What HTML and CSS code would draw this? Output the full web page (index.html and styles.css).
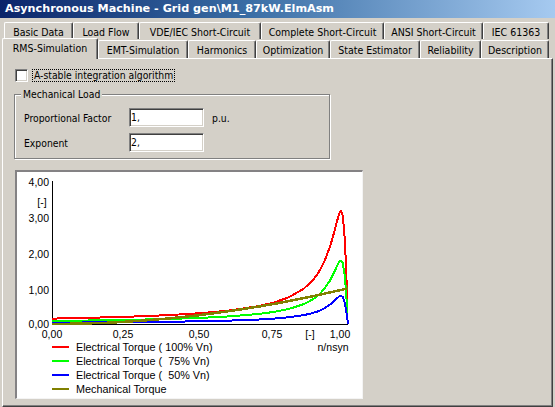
FILE: index.html
```html
<!DOCTYPE html>
<html>
<head>
<meta charset="utf-8">
<link rel="stylesheet" href="styles.css">
</head>
<body>
<div class="window">
  <div class="titlebar">Asynchronous Machine - Grid gen\M1_87kW.ElmAsm</div>
  <div class="tabs">
    <div class="tabrow back">
      <div class="tab w-basic">Basic Data</div>
      <div class="tab w-load">Load Flow</div>
      <div class="tab w-vde">VDE/IEC Short-Circuit</div>
      <div class="tab w-complete">Complete Short-Circuit</div>
      <div class="tab w-ansi">ANSI Short-Circuit</div>
      <div class="tab w-iec">IEC 61363</div>
    </div>
    <div class="tabrow front">
      <div class="tab selected w-rms">RMS-Simulation</div>
      <div class="tab w-emt">EMT-Simulation</div>
      <div class="tab w-harm">Harmonics</div>
      <div class="tab w-opt">Optimization</div>
      <div class="tab w-se">State Estimator</div>
      <div class="tab w-rel">Reliability</div>
      <div class="tab w-desc">Description</div>
    </div>
  </div>
  <div class="panel">
    <div class="checkrow">
      <span class="checkbox"></span>
      <span class="focus">A-stable integration algorithm</span>
    </div>
    <fieldset class="group">
      <legend>Mechanical Load</legend>
      <div class="field-row">
        <span class="field-label">Proportional Factor</span>
        <span class="input">1,</span>
        <span class="unit">p.u.</span>
      </div>
      <div class="field-row">
        <span class="field-label">Exponent</span>
        <span class="input">2,</span>
      </div>
    </fieldset>
    <div class="chart">
      <svg class="plot" width="345" height="226" viewBox="17 172 345 226">
        <g class="labels">
          <text x="49" y="186" text-anchor="end">4,00</text>
          <text x="42" y="206" text-anchor="middle">[-]</text>
          <text x="49" y="222" text-anchor="end">3,00</text>
          <text x="49" y="258" text-anchor="end">2,00</text>
          <text x="49" y="294" text-anchor="end">1,00</text>
          <text x="49" y="328" text-anchor="end">0,00</text>
          <text x="52" y="338" text-anchor="middle">0,00</text>
          <text x="123" y="338" text-anchor="middle">0,25</text>
          <text x="199" y="338" text-anchor="middle">0,50</text>
          <text x="272" y="338" text-anchor="middle">0,75</text>
          <text x="310" y="338" text-anchor="middle">[-]</text>
          <text x="340" y="338" text-anchor="middle">1,00</text>
          <text x="333" y="351" text-anchor="middle">n/nsyn</text>
        </g>
        <g class="axes">
          <line x1="52.5" y1="181" x2="52.5" y2="324.5"/>
          <line x1="52" y1="324.5" x2="348" y2="324.5"/>
        </g>
        <g class="curves">
          <polyline class="c-red" points="52,318.6 81.6,318 111.2,317.2 140.8,316.3 170.4,315 200,313.2 229.6,310.5 259.2,306 274,302.5 288.8,297.3 303.6,288.8 312.5,280.6 318.4,272.7 324.3,261.8 330.2,246.1 333.2,235.8 336.2,224.3 339.1,213.8 340.9,211 342.7,215.5 344.4,233.6 345.6,256.2 346.8,287.4 347.4,305"/>
          <polyline class="c-green" points="52,320.9 81.6,320.6 111.2,320.2 140.8,319.6 170.4,318.9 200,317.9 229.6,316.4 259.2,313.9 274,311.9 288.8,309 303.6,304.2 312.5,299.6 318.4,295.2 324.3,289 330.2,280.2 333.2,274.4 336.2,267.9 339.1,262 340.9,260.5 342.7,263 344.4,273.2 345.6,285.9 346.8,303.4 347.4,313.5"/>
          <polyline class="c-blue" points="52,322.6 81.6,322.5 111.2,322.3 140.8,322.1 170.4,321.7 200,321.3 229.6,320.6 259.2,319.5 274,318.6 288.8,317.3 303.6,315.2 312.5,313.1 318.4,311.2 324.3,308.4 330.2,304.5 333.2,302 336.2,299.1 339.1,296.4 340.9,295.8 342.7,296.9 344.4,301.4 345.6,307.1 346.8,314.8 347.4,319.4 348,324"/>
          <polyline class="c-olive" points="52,324 81.6,323.6 111.2,322.6 140.8,320.8 170.4,318.3 200,315.1 229.6,311.1 259.2,306.5 274,303.9 288.8,301.1 303.6,298.1 318.4,295 333.2,291.7 348,288.3"/>
        </g>
        <g class="legend">
          <line class="c-red" x1="52" y1="347" x2="69" y2="347"/>
          <line class="c-green" x1="52" y1="361" x2="69" y2="361"/>
          <line class="c-blue" x1="52" y1="375" x2="69" y2="375"/>
          <line class="c-olive" x1="52" y1="389" x2="69" y2="389"/>
          <text x="76" y="351">Electrical Torque ( 100% Vn)</text>
          <text x="76" y="365">Electrical Torque (  75% Vn)</text>
          <text x="76" y="379">Electrical Torque (  50% Vn)</text>
          <text x="76" y="393">Mechanical Torque</text>
        </g>
      </svg>
    </div>
  </div>
</div>
</body>
</html>
```

FILE: styles.css
```css
html, body {
  margin: 0;
  padding: 0;
}
body {
  width: 555px;
  height: 407px;
  overflow: hidden;
  background: #d4d0c8;
  color: #000;
  font-family: "DejaVu Sans Condensed", "DejaVu Sans", sans-serif;
  font-stretch: condensed;
  font-size: 10.3px;
}
.window {
  width: 555px;
  height: 407px;
}
.titlebar {
  height: 18px;
  line-height: 18px;
  padding-left: 5px;
  background: linear-gradient(to right, #0a246a 0%, #3a6ea5 45%, #a6caf0 100%);
  color: #fff;
  font-family: "DejaVu Sans", sans-serif;
  font-stretch: normal;
  font-weight: bold;
  font-size: 11.2px;
  white-space: nowrap;
}
.tabs {
  padding-top: 3px;
  font-size: 10.5px;
}
.tabrow {
  display: flex;
  align-items: flex-start;
  box-sizing: border-box;
}
.tabrow.back {
  height: 18px;
  padding: 1px 0 0 4px;
}
.tabrow.front {
  height: 19px;
  padding-left: 2px;
}
.tab {
  box-sizing: border-box;
  display: flex;
  align-items: center;
  justify-content: center;
  height: 17px;
  padding-top: 1px;
  border-top: 1px solid #fff;
  border-left: 1px solid #fff;
  border-right: 1px solid #404040;
  box-shadow: inset -1px 0 #808080;
  border-radius: 2px 2px 0 0;
  background: #d4d0c8;
  white-space: nowrap;
}
.front .tab {
  margin-top: 1px;
  height: 18px;
}
.front .tab.selected {
  position: relative;
  z-index: 1;
  margin-top: -1px;
  height: 21px;
  padding-top: 0;
  padding-bottom: 3px;
}
.w-basic { width: 69px; }
.w-load { width: 66px; }
.w-vde { width: 122px; }
.w-complete { width: 123px; }
.w-ansi { width: 99px; }
.w-iec { width: 66px; }
.w-rms { width: 96px; }
.w-emt { width: 90px; }
.w-harm { width: 68px; }
.w-opt { width: 74px; }
.w-se { width: 90px; }
.w-rel { width: 61px; }
.w-desc { width: 68px; }

.panel {
  box-sizing: border-box;
  margin-left: 2px;
  width: 551px;
  height: 349px;
  border-top: 1px solid #fff;
  border-left: 1px solid #fff;
  border-right: 1px solid #404040;
  border-bottom: 1px solid #404040;
  box-shadow: inset -1px -1px #808080;
  overflow: hidden;
}
.checkrow {
  display: flex;
  align-items: center;
  height: 13px;
  margin: 10px 0 0 12px;
}
.checkbox {
  box-sizing: border-box;
  width: 13px;
  height: 13px;
  background: #fff;
  border: 1px solid;
  border-color: #808080 #fff #fff #808080;
  box-shadow: inset 1px 1px #404040, inset -1px -1px #d4d0c8;
}
.focus {
  box-sizing: border-box;
  height: 13px;
  line-height: 11px;
  margin-left: 4px;
  padding: 0 1px;
  border: 1px dotted #000;
}
.group {
  box-sizing: border-box;
  width: 316px;
  margin: 6px 0 0 11px;
  padding: 7px 0 6px 9px;
  border: 1px solid #808080;
  box-shadow: inset 1px 1px #fff, 1px 1px #fff;
  min-width: 0;
}
.group legend {
  padding: 0 2px;
  margin-left: -3px;
  line-height: 13px;
  background: #d4d0c8;
}
.field-row {
  display: flex;
  align-items: center;
  height: 19px;
}
.field-row + .field-row {
  margin-top: 6px;
}
.field-label {
  width: 105px;
}
.input {
  box-sizing: border-box;
  width: 75px;
  height: 19px;
  line-height: 15px;
  background: #fff;
  border: 1px solid;
  border-color: #808080 #fff #fff #808080;
  box-shadow: inset 1px 1px #404040, inset -1px -1px #d4d0c8;
  padding: 1px 1px;
}
.unit {
  margin-left: 8px;
}
.chart {
  box-sizing: border-box;
  width: 348px;
  height: 229px;
  margin: 11px 0 0 12px;
  background: #fff;
  border-top: 2px solid #848284;
  border-left: 2px solid #848284;
  border-right: 1px solid #f4f4f4;
  border-bottom: 1px solid #f4f4f4;
}
.plot {
  display: block;
}
.labels text, .legend text {
  font-family: "Liberation Sans", Arial, sans-serif;
  font-size: 10.5px;
  fill: #000;
}
.legend text {
  font-size: 10.8px;
  white-space: pre;
}
.axes line {
  stroke: #000;
  stroke-width: 1;
  shape-rendering: crispEdges;
}
.curves polyline {
  fill: none;
  stroke-width: 2;
  stroke-linejoin: miter;
  shape-rendering: crispEdges;
}
.legend line {
  stroke-width: 2;
  shape-rendering: crispEdges;
}
.c-red { stroke: #ff0000; }
.c-green { stroke: #00ff00; }
.c-blue { stroke: #0000ff; }
.c-olive { stroke: #808000; }
.curves .c-olive { stroke-width: 2.5; }
```
